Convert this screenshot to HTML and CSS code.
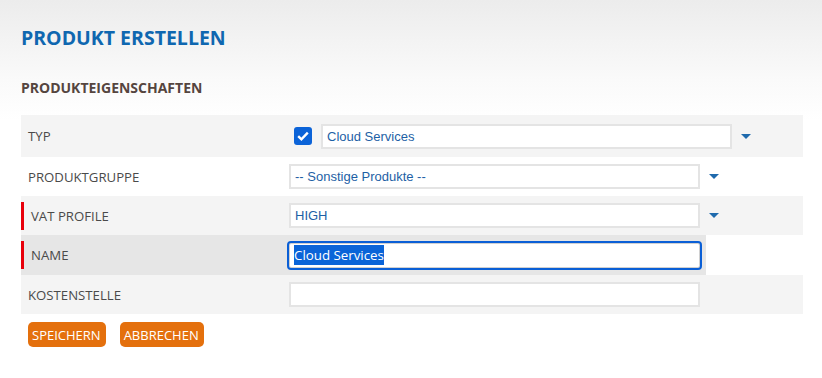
FILE: index.html
```html
<!DOCTYPE html>
<html>
	<head>
		<title>Produkt erstellen</title>
		<meta charset="utf-8">
		<link rel="stylesheet" href="styles.css">
	</head>
	<body>
		<div id="wrapper">
			<h1>Produkt erstellen</h1>
			<h2>Produkteigenschaften</h2>
			<div class="form">
				<div class="row row-typ">
					<div class="label"><span>Typ</span></div>
					<div class="value">
						<span class="check">
							<svg width="18" height="18" viewBox="0 0 18 18"><rect width="18" height="18" rx="3" fill="#0b63d8"/><path d="M4.2 9.2l3.2 3.1 6.4-6.6" fill="none" stroke="#fff" stroke-width="2.4"/></svg>
						</span>
						<div class="field select">Cloud Services</div>
						<span class="arrow"></span>
					</div>
				</div>
				<div class="row white">
					<div class="label"><span>Produktgruppe</span></div>
					<div class="value">
						<div class="field select">-- Sonstige Produkte --</div>
						<span class="arrow"></span>
					</div>
				</div>
				<div class="row">
					<div class="label"><span class="required">VAT Profile</span></div>
					<div class="value">
						<div class="field select">HIGH</div>
						<span class="arrow"></span>
					</div>
				</div>
				<div class="row white active">
					<div class="label"><span class="required">Name</span></div>
					<div class="value">
						<div class="field text focused"><span class="sel">Cloud Services</span></div>
					</div>
				</div>
				<div class="row">
					<div class="label"><span>Kostenstelle</span></div>
					<div class="value">
						<div class="field text"></div>
					</div>
				</div>
			</div>
			<div class="buttons">
				<button>Speichern</button>
				<button>Abbrechen</button>
			</div>
		</div>
	</body>
</html>
```

FILE: styles.css
```css
html {height:100%;}
body {margin:0;min-height:100%;font-family:"Open Sans",sans-serif;background:linear-gradient(#ececec 0px,#fafafa 80px,#fff 120px) no-repeat #fff;}
#wrapper {padding:25px 19px 20px 21px;}
h1 {margin:0;font-size:19.5px;line-height:26px;font-weight:bold;color:#0f67b0;text-transform:uppercase;}
h2 {margin:27px 0 18px 0;font-size:14px;line-height:19px;font-weight:bold;color:#55453f;text-transform:uppercase;}
.form {width:782px;}
.row {display:flex;align-items:center;height:39px;background:#f4f4f4;}
.row.row-typ {height:42px;}
.row.white {background:#fff;}
.row.active {height:40px;}
.row.active .label,.row.active .value {background:#e6e6e6;}
.label {width:264px;height:100%;display:flex;align-items:center;}
.label span {display:block;padding-left:7px;line-height:28px;font-size:13.2px;color:#4a4a4a;text-transform:uppercase;}
.label span.required {border-left:3px solid #e8000b;}
.value {width:417px;height:100%;padding-left:4px;display:flex;align-items:center;}
.check {display:block;width:18px;height:18px;margin:0 9px 0 5px;}
.check svg {display:block;}
.field {box-sizing:border-box;flex:none;width:411px;height:25px;border:2px solid #e4e4e4;background:#fff;padding:0 4px;line-height:21px;font-size:13px;}
.field.select {font-family:"Liberation Sans",Arial,sans-serif;color:#1d5fa5;}
.field.text {font-family:"Open Sans",sans-serif;color:#222;font-size:13.3px;}
.field.focused {border:1px solid #d0d0d0;outline:2px solid #0a5fd6;border-radius:2px;line-height:23px;}
.sel {background:#0a64d8;color:#fff;padding:1px 0;}
.arrow {flex:none;width:0;height:0;margin-left:9px;border-left:5px solid transparent;border-right:5px solid transparent;border-top:5px solid #1f6aad;}
.buttons {display:flex;gap:14px;margin-top:8px;padding-left:7px;}
button {font-family:"Open Sans",sans-serif;font-size:13px;line-height:24px;height:25px;padding:0 5px 0 4px;border:0;border-radius:5px;background-color:#e4700d;color:#fff;text-transform:uppercase;}
button:hover {cursor:pointer;}
```
